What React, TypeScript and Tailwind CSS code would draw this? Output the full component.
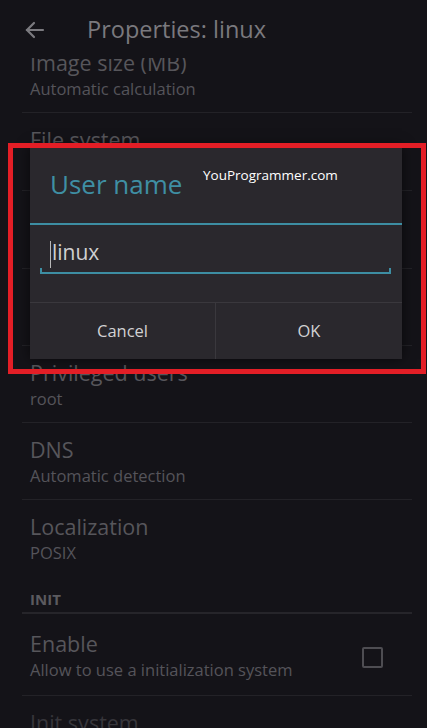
import React from "react";

type Pref = { title: string; summary?: string; extra?: string; disabled?: boolean };

const generalPrefs: Pref[] = [
  { title: "Image size (MB)", summary: "Automatic calculation", extra: "pb-[10px]" },
  { title: "File system", summary: "ext4", extra: "pb-[11px]" },
  { title: "User name", summary: "linux", extra: "pb-[11px]" },
  { title: "User password", summary: "changeme", extra: "pb-[10px]" },
  { title: "Privileged users", summary: "root", extra: "pb-[10px]" },
  { title: "DNS", summary: "Automatic detection", extra: "pb-[10px]" },
];

function BackArrow() {
  return (
    <svg width="20" height="18" viewBox="0 0 20 18" fill="none" stroke="#7b7a7f" strokeWidth="2.2" strokeLinecap="round">
      <path d="M2 9h16" />
      <path d="M9 2L2 9l7 7" />
    </svg>
  );
}

function PrefRow({ pref, last }: { pref: Pref; last?: boolean }) {
  return (
    <div className={`flex items-center pt-[14px] pl-[8px] ${pref.extra ?? "pb-[10px]"} ${last ? "" : "border-b border-[#232227]"}`}>
      <div className="flex-1 whitespace-nowrap">
        <div className={`text-[21.5px] leading-[26px] ${pref.disabled ? "text-[#37363b]" : "text-[#57565b]"}`}>{pref.title}</div>
        {pref.summary ? (
          <div className={`text-[16.5px] leading-[26px] ${pref.disabled ? "text-[#343338]" : "text-[#55545a]"}`}>{pref.summary}</div>
        ) : null}
      </div>
    </div>
  );
}

function UserNameDialog() {
  return (
    <div className="absolute left-[30px] top-[146px] w-[372px] bg-[#2a282d] shadow-[0_0_12px_rgba(0,0,0,0.6)]">
      <div className="h-[77px] pt-[22px] pl-[20px] text-[26px] leading-[32px] text-[#3f8fa4]">User name</div>
      <div className="h-[2px] bg-[#3d8ea3]" />
      <div className="h-[77px] pt-[11px] pl-[10px] pr-[11px]">
        <div className="relative h-[38px]">
          <span className="absolute left-[10px] top-[5px] h-[27px] w-px bg-[#b8b8b8]" />
          <div className="pl-[12px] text-[21px] leading-[32px] text-[#d0d0d2]">linux</div>
          <div className="absolute bottom-0 left-0 right-0 h-[2px] bg-[#3d8ea3]" />
          <div className="absolute bottom-0 left-0 h-[6px] w-[2px] bg-[#3d8ea3]" />
          <div className="absolute bottom-0 right-0 h-[6px] w-[2px] bg-[#3d8ea3]" />
        </div>
      </div>
      <div className="grid h-[57px] grid-cols-[186px_1fr] border-t border-[#3a383d]">
        <div className="flex items-center justify-center border-r border-[#3a383d] text-[16.5px] text-[#d2d2d4]">Cancel</div>
        <div className="flex items-center justify-center text-[16.5px] text-[#d2d2d4]">OK</div>
      </div>
    </div>
  );
}

export default function App() {
  return (
    <div className="relative flex h-[728px] w-[427px] flex-col overflow-hidden bg-[#141318] font-['Open_Sans',sans-serif]">
      <div className="relative z-10 flex h-[58px] shrink-0 items-center bg-[#141318]">
        <div className="ml-[25px] mt-[2px] flex w-[62px]">
          <BackArrow />
        </div>
        <div className="text-[23.5px] leading-[30px] text-[#7a797e]">Properties: linux</div>
      </div>
      <div className="flex-1 overflow-hidden">
        <div className="-mt-[22px] ml-[22px] mr-[15px]">
          {generalPrefs.map((pref) => (
            <PrefRow key={pref.title} pref={pref} />
          ))}
          <PrefRow pref={{ title: "Localization", summary: "POSIX" }} last />
          <div className="h-[38px] border-b-2 border-[#26252a] pt-[13px] pl-[8px] text-[15px] font-bold leading-[20px] text-[#5b5a5f]">
            INIT
          </div>
          <div className="flex items-center border-b border-[#232227] pt-[17px] pb-[12px] pl-[8px]">
            <div className="flex-1 whitespace-nowrap">
              <div className="text-[21.5px] leading-[26px] text-[#57565b]">Enable</div>
              <div className="text-[16.5px] leading-[26px] text-[#55545a]">Allow to use a initialization system</div>
            </div>
            <div className="mr-[29px] h-[21px] w-[21px] rounded-[2px] border-2 border-[#4e4d52]" />
          </div>
          <PrefRow pref={{ title: "Init system", summary: "run-parts", disabled: true }} />
        </div>
      </div>
      <UserNameDialog />
      <div className="absolute left-[203px] top-[165px] text-[13.5px] leading-[20px] text-white">YouProgrammer.com</div>
      <div className="pointer-events-none absolute left-[8px] top-[143px] h-[231px] w-[418px] border-[5px] border-[#e31e26]" />
    </div>
  );
}
